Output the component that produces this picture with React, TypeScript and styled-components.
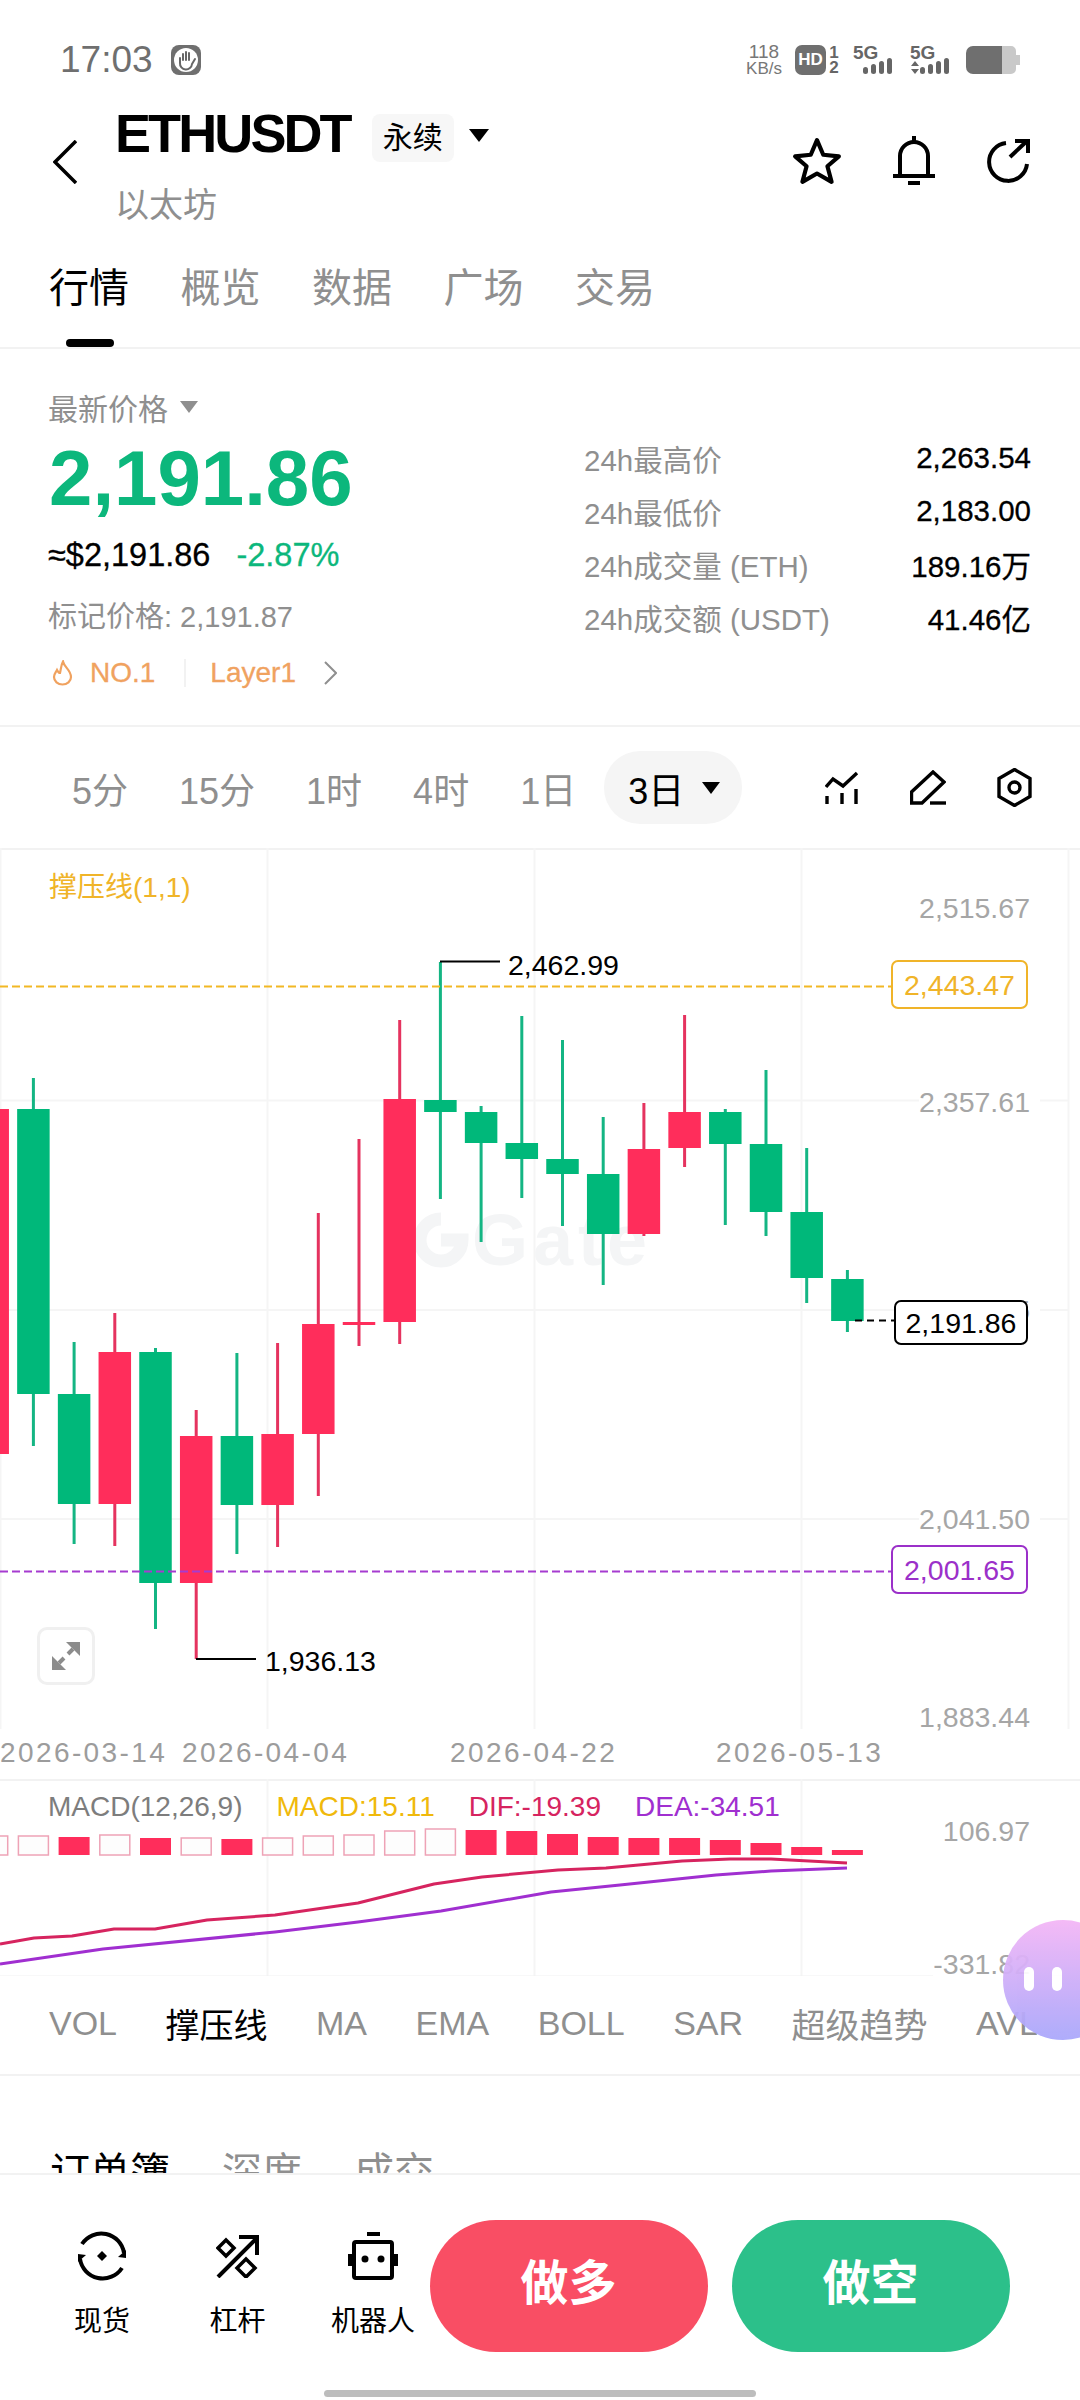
import React from 'react';
import styled, { createGlobalStyle } from 'styled-components';

const FONT = '"Liberation Sans", "Noto Sans CJK SC", sans-serif';

const GlobalStyle = createGlobalStyle`
  html, body {
    margin: 0;
    padding: 0;
    background: #fff;
  }
  * {
    box-sizing: border-box;
  }
`;

const Root = styled.div`
  position: relative;
  width: 1080px;
  height: 2400px;
  overflow: hidden;
  display: flex;
  flex-direction: column;
  background: #fff;
  color: #000;
  font-family: ${FONT};
`;

/* status bar */
const StatusBar = styled.div`
  height: 100px;
  padding: 40px 60px 20px 60px;
  display: flex;
  align-items: center;
  color: #6f6f6f;
`;

const Clock = styled.span`
  font-size: 37px;
  line-height: 40px;
  margin-right: 18px;
`;

const StatusRight = styled.div`
  margin-left: auto;
  display: flex;
  align-items: center;
  height: 40px;
`;

const NetSpeed = styled.div`
  width: 38px;
  margin-left: -9px;
  display: flex;
  flex-direction: column;
  align-items: center;
  font-size: 19px;
  line-height: 17px;
  color: #777;
  & > small {
    font-size: 17px;
    white-space: nowrap;
  }
`;

const HdBadge = styled.div`
  width: 31px;
  height: 30px;
  margin-left: 12px;
  border-radius: 7px;
  background: #6f6f6f;
  color: #fff;
  font-size: 17px;
  font-weight: 700;
  line-height: 30px;
  text-align: center;
`;

const SimSlots = styled.div`
  width: 14px;
  margin-left: 1px;
  display: flex;
  flex-direction: column;
  align-items: center;
  font-size: 17px;
  font-weight: 700;
  line-height: 15px;
  color: #666;
`;

/* header */
const Header = styled.div`
  height: 130px;
  padding: 14px 50px 0 53px;
  display: flex;
  align-items: flex-start;
`;

const BackButton = styled.svg`
  margin-top: 26px;
  margin-right: 38px;
  flex: none;
`;

const TitleBlock = styled.div`
  display: flex;
  flex-direction: column;
`;

const TitleLine = styled.div`
  display: flex;
  align-items: center;
  height: 48px;
`;

const Symbol = styled.span`
  font-size: 54px;
  font-weight: 700;
  letter-spacing: -2.9px;
  line-height: 48px;
  margin-top: -10px;
  margin-right: 22px;
`;

const Tag = styled.span`
  width: 82px;
  height: 48px;
  border-radius: 8px;
  background: #f7f7f7;
  font-size: 30px;
  line-height: 48px;
  text-align: center;
`;

const Caret = styled.span<{ $size: number; $color: string }>`
  display: inline-block;
  flex: none;
  width: 0;
  height: 0;
  border-left: ${(p) => p.$size}px solid transparent;
  border-right: ${(p) => p.$size}px solid transparent;
  border-top: ${(p) => Math.round(p.$size * 1.3)}px solid ${(p) => p.$color};
`;

const TagCaret = styled(Caret)`
  margin-left: 15px;
  margin-top: -6px;
`;

const SubName = styled.div`
  margin-top: 23px;
  font-size: 34px;
  line-height: 40px;
  color: #8f8f8f;
`;

const HeaderActions = styled.div`
  margin-left: auto;
  display: flex;
  align-items: center;
  height: 50px;
  margin-top: 22px;
  gap: 51px;
`;

/* main tabs */
const MainTabs = styled.div`
  height: 119px;
  padding: 38px 0 0 49px;
  display: flex;
  gap: 51.5px;
  border-bottom: 2px solid #f2f2f2;
`;

const MainTab = styled.span<{ $active?: boolean }>`
  position: relative;
  height: 40px;
  font-size: 40px;
  line-height: 40px;
  color: ${(p) => (p.$active ? '#000' : '#8f8f8f')};
  &::after {
    content: '';
    display: ${(p) => (p.$active ? 'block' : 'none')};
    position: absolute;
    left: 17px;
    top: 71px;
    width: 48px;
    height: 8px;
    border-radius: 4px;
    background: #000;
  }
`;

/* price info */
const InfoSection = styled.div`
  height: 378px;
  padding: 38px 49px 0 48px;
  display: flex;
  justify-content: space-between;
  border-bottom: 2px solid #f2f2f2;
`;

const InfoLeft = styled.div`
  display: flex;
  flex-direction: column;
`;

const PriceLabel = styled.div`
  display: flex;
  align-items: center;
  gap: 12px;
  height: 40px;
  font-size: 30px;
  color: #8f8f8f;
`;

const BigPrice = styled.div`
  margin-top: 11px;
  font-size: 78px;
  font-weight: 700;
  line-height: 80px;
  color: #0cb77c;
  margin-left: 1px;
`;

const FiatLine = styled.div`
  margin-top: 17px;
  display: flex;
  gap: 26px;
  font-size: 32.5px;
  line-height: 40px;
  -webkit-text-stroke: 0.3px currentColor;
`;

const Change = styled.span`
  color: #0cb77c;
`;

const MarkPrice = styled.div`
  margin-top: 22px;
  font-size: 29px;
  line-height: 40px;
  color: #8f8f8f;
`;

const TagRow = styled.div`
  margin-top: 16px;
  padding-left: 4px;
  display: flex;
  align-items: center;
  height: 40px;
  font-size: 28px;
  color: #f0a25f;
  -webkit-text-stroke: 0.3px currentColor;
`;

const TagDivider = styled.span`
  width: 2px;
  height: 28px;
  margin: 0 24px 0 29px;
  background: #f2f2f2;
`;

const InfoRight = styled.div`
  width: 447px;
  padding-top: 44px;
  display: flex;
  flex-direction: column;
`;

const StatRow = styled.div`
  height: 53px;
  display: flex;
  align-items: center;
  justify-content: space-between;
  font-size: 29.5px;
`;

const StatLabel = styled.span`
  color: #8f8f8f;
`;

const StatValue = styled.span`
  -webkit-text-stroke: 0.3px currentColor;
`;

/* timeframe row */
const TimeRow = styled.div`
  height: 121px;
  padding: 0 48px 0 72px;
  display: flex;
  align-items: center;
  gap: 51px;
  font-size: 36px;
  color: #8f8f8f;
`;

const TimePill = styled.div`
  margin-left: -23px;
  width: 138px;
  height: 73px;
  padding-left: 24px;
  display: flex;
  align-items: center;
  gap: 18px;
  border-radius: 36px;
  background: #f5f5f5;
  color: #000;
`;

const ToolIcons = styled.div`
  margin-left: auto;
  display: flex;
  align-items: center;
  gap: 51px;
`;

/* chart */
const ChartPanel = styled.div`
  position: relative;
  height: 881px;
  border-top: 2px solid #f2f2f2;
  flex: none;
`;

const ChartSvg = styled.svg`
  display: block;
  position: absolute;
  left: 0;
  top: -2px;
`;

const IndicatorName = styled.div`
  position: absolute;
  left: 49px;
  top: 21px;
  font-size: 28px;
  line-height: 34px;
  color: #f0b429;
`;

const AxisLabel = styled.span<{ $y: number }>`
  position: absolute;
  right: 50px;
  top: ${(p) => p.$y}px;
  transform: translateY(-50%);
  padding: 0 10px 0 0;
  margin-right: -10px;
  font-size: 28.5px;
  line-height: 32px;
  color: #a6a6a6;
  background: #fff;
`;

const PriceTag = styled.span<{ $y: number; $color: string; $width: number }>`
  position: absolute;
  right: 52px;
  top: ${(p) => p.$y}px;
  width: ${(p) => p.$width}px;
  height: ${(p) => (p.$color === '#000' ? 45 : 49)}px;
  border: 2px solid ${(p) => p.$color};
  border-radius: 7px;
  background: #fff;
  font-size: 28.5px;
  line-height: ${(p) => (p.$color === '#000' ? 42 : 46)}px;
  text-align: center;
  color: ${(p) => p.$color};
`;

const PriceNote = styled.span<{ $x: number; $y: number }>`
  position: absolute;
  left: ${(p) => p.$x}px;
  top: ${(p) => p.$y}px;
  transform: translateY(-50%);
  font-size: 28.5px;
  line-height: 32px;
`;

const ExpandButton = styled.div`
  position: absolute;
  left: 37px;
  top: 777px;
  width: 58px;
  height: 58px;
  display: flex;
  align-items: center;
  justify-content: center;
  border: 3px solid #f0f0f0;
  border-radius: 10px;
  background: #fff;
`;

const DateAxis = styled.div`
  height: 52px;
  display: grid;
  grid-template-columns: 182px 268px 266px 1fr;
  align-items: center;
  padding-bottom: 2px;
  font-size: 28px;
  letter-spacing: 2.4px;
  color: #9c9c9c;
  border-bottom: 2px solid #f2f2f2;
`;

/* macd */
const MacdPanel = styled.div`
  position: relative;
  height: 197px;
  flex: none;
`;

const MacdLegend = styled.div`
  position: absolute;
  left: 48px;
  top: 9px;
  display: flex;
  gap: 34px;
  font-size: 28px;
  line-height: 34px;
`;

const LegendItem = styled.span<{ $color: string }>`
  color: ${(p) => p.$color};
`;

/* indicator tabs */
const IndicatorTabs = styled.div`
  height: 98px;
  padding: 0 0 6px 49px;
  display: flex;
  align-items: center;
  gap: 48.5px;
  font-size: 34px;
  white-space: nowrap;
  color: #8f8f8f;
  border-bottom: 2px solid #f2f2f2;
  flex: none;
`;

const IndicatorTab = styled.span<{ $active?: boolean }>`
  color: ${(p) => (p.$active ? '#000' : '#8f8f8f')};
`;

/* order book tabs, cut by the bottom bar */
const BookTabs = styled.div`
  flex: 1;
  min-height: 0;
  overflow: hidden;
  padding: 74px 0 0 50px;
  display: flex;
  gap: 52px;
`;

const BookTab = styled.span<{ $active?: boolean }>`
  height: 40px;
  font-size: 40px;
  line-height: 44px;
  color: ${(p) => (p.$active ? '#000' : '#8f8f8f')};
`;

/* bottom bar */
const BottomBar = styled.div`
  height: 227px;
  flex: none;
  display: flex;
  flex-direction: column;
  align-items: center;
  border-top: 2px solid #f2f2f2;
  background: #fff;
`;

const BottomRow = styled.div`
  width: 100%;
  height: 132px;
  margin-top: 45px;
  padding: 0 48px 0 52px;
  display: flex;
`;

const ShortCut = styled.div`
  width: 100px;
  margin-right: 35.5px;
  padding-top: 11px;
  display: flex;
  flex-direction: column;
  align-items: center;
  height: 132px;
  font-size: 28px;
  line-height: 34px;
`;

const ShortCutIcon = styled.div`
  height: 50px;
  margin-bottom: 24px;
  display: flex;
  align-items: center;
`;

const TradeButton = styled.div<{ $color: string }>`
  width: 278px;
  height: 132px;
  margin-left: ${(p) => (p.$color === '#2cc08a' ? 24 : -29)}px;
  border-radius: 66px;
  background: ${(p) => p.$color};
  color: #fff;
  font-size: 48px;
  font-weight: 700;
  line-height: 128px;
  text-align: center;
`;

const HomeBar = styled.div`
  width: 432px;
  height: 7px;
  margin-top: 38px;
  border-radius: 4px;
  background: #bdbdbd;
`;

const FloatingBall = styled.div`
  position: absolute;
  left: 1003px;
  top: 1920px;
  width: 120px;
  height: 120px;
  padding: 47px 0 0 21px;
  display: flex;
  gap: 18px;
  border-radius: 50%;
  background: linear-gradient(180deg, #f4b6f6 0%, #a9a7fb 100%);
  opacity: 0.94;
`;

const BallEye = styled.span`
  width: 10px;
  height: 24px;
  border-radius: 5px;
  background: #fff;
`;

const RED = '#ff2d5b';
const RED_WICK = '#e5335f';
const GREEN = '#00b87a';
const GREEN_WICK = '#14b583';

// [rising, wick top, body top, body bottom, wick bottom], page y pixels
const CANDLES: [boolean, number, number, number, number][] = [
  [true, 1109, 1109, 1454, 1454],
  [false, 1078, 1109, 1394, 1446],
  [false, 1342, 1394, 1504, 1544],
  [true, 1313, 1352, 1504, 1546],
  [false, 1348, 1352, 1583, 1629],
  [true, 1410, 1436, 1583, 1659],
  [false, 1353, 1436, 1505, 1554],
  [true, 1343, 1434, 1505, 1547],
  [true, 1213, 1324, 1434, 1496],
  [true, 1139, 1322, 1325, 1346],
  [true, 1020, 1099, 1322, 1344],
  [false, 962, 1100, 1112, 1199],
  [false, 1106, 1112, 1143, 1242],
  [false, 1016, 1143, 1159, 1198],
  [false, 1040, 1159, 1174, 1226],
  [false, 1117, 1174, 1234, 1285],
  [true, 1103, 1149, 1234, 1236],
  [true, 1015, 1112, 1148, 1167],
  [false, 1109, 1112, 1144, 1225],
  [false, 1070, 1144, 1212, 1236],
  [false, 1148, 1212, 1278, 1303],
  [false, 1270, 1279, 1321, 1332],
];

// [filled, top y]
const MACD_BARS: [boolean, number][] = [
  [false, 1836],
  [false, 1836],
  [true, 1837],
  [false, 1835],
  [true, 1838],
  [false, 1838],
  [true, 1839],
  [false, 1838],
  [false, 1836],
  [false, 1835],
  [false, 1831],
  [false, 1829],
  [true, 1830],
  [true, 1831],
  [true, 1834],
  [true, 1837],
  [true, 1838],
  [true, 1838],
  [true, 1840],
  [true, 1843],
  [true, 1847],
  [true, 1850],
];

const candleX = (i: number) => -7.3 + 40.7 * i;

const StarIcon = () => (
  <svg width="50" height="48" viewBox="0 0 48 46" fill="none" stroke="#000" strokeWidth="4" strokeLinejoin="round">
    <polygon points="24,3 30,17 45,18.5 34,28 38,43 24,35 10,43 14,28 3,18.5 18,17" />
  </svg>
);

const BellIcon = () => (
  <svg width="42" height="50" viewBox="0 0 42 50" fill="none" stroke="#000" strokeWidth="4">
    <path d="M21 0V6" />
    <path d="M7 40V20a14 14 0 0 1 28 0V40" />
    <path d="M0 40H42" />
    <path d="M15 47H27" />
  </svg>
);

const ShareIcon = () => (
  <svg width="44" height="44" viewBox="0 0 44 44" fill="none" stroke="#000" strokeWidth="4">
    <path d="M20 4A19 19 0 1 0 41 25" />
    <path d="M24 18L41 2" />
    <path d="M29 2H42V14" />
  </svg>
);

const ChartIcon = () => (
  <svg width="34" height="34" viewBox="0 0 34 34" fill="none" stroke="#000" strokeWidth="3.4">
    <path d="M1 16L8 8L18 15L32 2" />
    <path d="M2 25V33M17 22V33M31 18V33" />
  </svg>
);

const PencilIcon = () => (
  <svg width="36" height="35" viewBox="0 0 36 35" fill="none" stroke="#000" strokeWidth="3.4">
    <path d="M1.5 33V22L23 2L34 12L12 33Z" />
    <path d="M20 33H36" />
  </svg>
);

const HexIcon = () => (
  <svg width="35" height="39" viewBox="0 0 35 39" fill="none" stroke="#000" strokeWidth="3.4">
    <polygon points="17.5,1.5 33,10.5 33,28.5 17.5,37.5 2,28.5 2,10.5" />
    <circle cx="17.5" cy="19.5" r="5.5" />
  </svg>
);

const SyncIcon = () => (
  <svg width="50" height="50" viewBox="0 0 50 50" fill="none" stroke="#000" strokeWidth="4">
    <path d="M5 13A23 23 0 0 1 47 22" />
    <path d="M45 37A23 23 0 0 1 3 28" />
    <polygon points="49,19 49,27 41,26" fill="#000" stroke="none" />
    <polygon points="1,23 9,24 1,31" fill="#000" stroke="none" />
    <polygon points="25,20 30,25 25,30 20,25" fill="#000" stroke="none" />
  </svg>
);

const LeverIcon = () => (
  <svg width="43" height="43" viewBox="0 0 43 43" fill="none" stroke="#000" strokeWidth="4">
    <path d="M2 42L41 3" />
    <path d="M23 2H41V20" />
    <polygon points="10,5 18,13 10,21 2,13" strokeWidth="3.5" />
    <polygon points="30,24 39,33 30,42 21,33" strokeWidth="3.5" />
  </svg>
);

const RobotIcon = () => (
  <svg width="50" height="48" viewBox="0 0 50 48" fill="none" stroke="#000" strokeWidth="4">
    <path d="M19 2H32" />
    <rect x="6" y="10" width="38" height="36" rx="2" />
    <path d="M2 22V34M48 22V34" />
    <circle cx="17" cy="27" r="3.5" fill="#000" stroke="none" />
    <circle cx="33" cy="27" r="3.5" fill="#000" stroke="none" />
  </svg>
);

const CHART_WIDTH = 1080;

const CandleChart = () => (
  <ChartSvg width={CHART_WIDTH} height="881" viewBox="0 848 1080 881">
    {[0, 267, 534, 801, 1068].map((x) => (
      <line key={x} x1={x + 0.5} x2={x + 0.5} y1="848" y2="1729" stroke="#f5f5f5" strokeWidth="2" />
    ))}
    {[1100.5, 1310, 1519].map((y) => (
      <line key={y} x1="0" x2="1068" y1={y} y2={y} stroke="#f5f5f5" strokeWidth="2" />
    ))}

    <g fill="none" stroke="#f4f5f6" strokeWidth="13">
      <path d="M441 1219A21 21 0 1 0 462 1240H441" />
    </g>
    <text x="472" y="1265" fontFamily={FONT} fontWeight="700" fontSize="72" letterSpacing="5" fill="#f4f5f6">
      Gate
    </text>

    {CANDLES.map(([up, wickTop, top, bottom, wickBottom], i) => {
      const x = candleX(i);
      return (
        <g key={i}>
          <rect x={x - 1.5} y={wickTop} width="3" height={wickBottom - wickTop} fill={up ? RED_WICK : GREEN_WICK} />
          <rect x={x - 16.25} y={top} width="32.5" height={bottom - top} fill={up ? RED : GREEN} />
        </g>
      );
    })}

    <line x1="440" x2="500" y1="961.5" y2="961.5" stroke="#000" strokeWidth="2" />
    <line x1="196" x2="256" y1="1659" y2="1659" stroke="#000" strokeWidth="2" />
    <line x1="0" x2="891" y1="986.5" y2="986.5" stroke="#f2b824" strokeWidth="2" strokeDasharray="8 4" />
    <line x1="0" x2="891" y1="1571.5" y2="1571.5" stroke="#a63bd0" strokeWidth="2" strokeDasharray="8 4" />
    <line x1="855" x2="895" y1="1320.5" y2="1320.5" stroke="#000" strokeWidth="2" strokeDasharray="7 5" />
  </ChartSvg>
);

const MacdChart = () => (
  <ChartSvg width={CHART_WIDTH} height="197" viewBox="0 1779 1080 197">
    {[267, 534, 801].map((x) => (
      <line key={x} x1={x + 0.5} x2={x + 0.5} y1="1779" y2="1976" stroke="#f5f5f5" strokeWidth="2" />
    ))}
    <line x1="0" x2="1068" y1="1976.5" y2="1976.5" stroke="#f2f2f2" strokeWidth="2" />
    {MACD_BARS.map(([filled, top], i) => {
      const x = candleX(i);
      return filled ? (
        <rect key={i} x={x - 15.5} y={top} width="31" height={1855 - top} fill={RED} />
      ) : (
        <rect key={i} x={x - 15} y={top} width="30" height={1855 - top} fill="#fdfdfd" stroke="#eea3b6" strokeWidth="1.5" />
      );
    })}
    <polyline
      fill="none"
      stroke="#d6245f"
      strokeWidth="3"
      strokeLinejoin="round"
      points="0,1944 34,1938 72,1936 114,1929 155,1929 207,1920 275,1915 358,1903 434,1884 482,1877 558,1870 606,1868 682,1861 730,1859 771,1859 847,1863"
    />
    <polyline
      fill="none"
      stroke="#a02fd0"
      strokeWidth="3"
      strokeLinejoin="round"
      points="0,1964 103,1949 275,1932 358,1922 441,1911 551,1892 620,1885 716,1875 771,1871 847,1868"
    />
  </ChartSvg>
);

const HandBadge = () => (
  <svg width="30" height="30" viewBox="0 0 30 30">
    <rect width="30" height="30" rx="8" fill="#6f6f6f" />
    <circle cx="15" cy="15" r="12" fill="#fff" />
    <path d="M9 13V18a6 6 0 0 0 12 1l3-5M12 9V15M15 7V15M18 8V15" fill="none" stroke="#666" strokeWidth="2" strokeLinecap="round" />
  </svg>
);

const SignalIcon = ({ arrows }: { arrows?: boolean }) => (
  <svg width="44" height="30" viewBox="0 0 44 30">
    <text x="0" y="14" fontFamily={FONT} fontSize="19" fontWeight="700" fill="#666">
      5G
    </text>
    {arrows && <path d="M1 21L5 16L9 21ZM1 24H9L5 29Z" fill="#666" />}
    <rect x="10" y="22" width="5" height="7" rx="2.5" fill="#666" />
    <rect x="18" y="19" width="5" height="10" rx="2.5" fill="#666" />
    <rect x="26" y="16" width="5" height="13" rx="2.5" fill="#666" />
    <rect x="34" y="13" width="5" height="16" rx="2.5" fill="#666" />
  </svg>
);

const BatteryIcon = () => (
  <svg width="54" height="28" viewBox="0 0 54 28">
    <path d="M36 0H45a5 5 0 0 1 5 5V9h4V19h-4v4a5 5 0 0 1 -5 5H36Z" fill="#c9c9c9" />
    <path d="M7 0H36V28H7a7 7 0 0 1 -7 -7V7a7 7 0 0 1 7 -7Z" fill="#6f6f6f" />
  </svg>
);

const StatRows = [
  ['24h最高价', '2,263.54'],
  ['24h最低价', '2,183.00'],
  ['24h成交量 (ETH)', '189.16万'],
  ['24h成交额 (USDT)', '41.46亿'],
];

const App: React.FC = () => (
  <Root>
    <GlobalStyle />
    <StatusBar>
      <Clock>17:03</Clock>
      <HandBadge />
      <StatusRight>
        <NetSpeed>
          118
          <small>KB/s</small>
        </NetSpeed>
        <HdBadge>HD</HdBadge>
        <SimSlots>
          <span>1</span>
          <span>2</span>
        </SimSlots>
        <span style={{ width: 12 }} />
        <SignalIcon />
        <span style={{ width: 13 }} />
        <SignalIcon arrows />
        <span style={{ width: 12 }} />
        <BatteryIcon />
      </StatusRight>
    </StatusBar>

    <Header>
      <BackButton width="24" height="44" viewBox="0 0 24 44" fill="none" stroke="#000" strokeWidth="3.5">
        <path d="M23 1L2 22L23 43" />
      </BackButton>
      <TitleBlock>
        <TitleLine>
          <Symbol>ETHUSDT</Symbol>
          <Tag>永续</Tag>
          <TagCaret $size={10} $color="#000" />
        </TitleLine>
        <SubName>以太坊</SubName>
      </TitleBlock>
      <HeaderActions>
        <StarIcon />
        <BellIcon />
        <ShareIcon />
      </HeaderActions>
    </Header>

    <MainTabs>
      <MainTab $active>行情</MainTab>
      <MainTab>概览</MainTab>
      <MainTab>数据</MainTab>
      <MainTab>广场</MainTab>
      <MainTab>交易</MainTab>
    </MainTabs>

    <InfoSection>
      <InfoLeft>
        <PriceLabel>
          最新价格
          <Caret $size={9} $color="#8f8f8f" />
        </PriceLabel>
        <BigPrice>2,191.86</BigPrice>
        <FiatLine>
          <span>≈$2,191.86</span>
          <Change>-2.87%</Change>
        </FiatLine>
        <MarkPrice>标记价格: 2,191.87</MarkPrice>
        <TagRow>
          <svg width="21" height="26" viewBox="0 0 21 26" fill="none" stroke="#f0a25f" strokeWidth="2.2" style={{ marginRight: 17 }}>
            <path d="M11 1.5C12 7 19 10 19 17a8.5 7.5 0 0 1 -17 0C2 14 4 12 5 10C6 12 7 13 8 13C9 9 9 5 11 1.5Z" />
          </svg>
          NO.1
          <TagDivider />
          Layer1
          <svg width="13" height="24" viewBox="0 0 13 24" fill="none" stroke="#8f8f8f" strokeWidth="2" style={{ marginLeft: 28 }}>
            <path d="M1 1L12 12L1 23" />
          </svg>
        </TagRow>
      </InfoLeft>
      <InfoRight>
        {StatRows.map(([label, value]) => (
          <StatRow key={label}>
            <StatLabel>{label}</StatLabel>
            <StatValue>{value}</StatValue>
          </StatRow>
        ))}
      </InfoRight>
    </InfoSection>

    <TimeRow>
      <span>5分</span>
      <span>15分</span>
      <span>1时</span>
      <span>4时</span>
      <span>1日</span>
      <TimePill>
        3日
        <Caret $size={9} $color="#000" />
      </TimePill>
      <ToolIcons>
        <ChartIcon />
        <PencilIcon />
        <HexIcon />
      </ToolIcons>
    </TimeRow>

    <ChartPanel>
      <CandleChart />
      <IndicatorName>撑压线(1,1)</IndicatorName>
      <AxisLabel $y={58}>2,515.67</AxisLabel>
      <AxisLabel $y={252}>2,357.61</AxisLabel>
      <AxisLabel $y={460}>2,199.55</AxisLabel>
      <AxisLabel $y={669}>2,041.50</AxisLabel>
      <AxisLabel $y={867}>1,883.44</AxisLabel>
      <PriceTag $y={110} $color="#f0b429" $width={137}>2,443.47</PriceTag>
      <PriceTag $y={450} $color="#000" $width={134}>2,191.86</PriceTag>
      <PriceTag $y={695} $color="#9b30c9" $width={137}>2,001.65</PriceTag>
      <PriceNote $x={508} $y={115}>2,462.99</PriceNote>
      <PriceNote $x={265} $y={811}>1,936.13</PriceNote>
      <ExpandButton>
        <svg width="28" height="28" viewBox="0 0 28 28" fill="#8c8c8c" stroke="none">
          <polygon points="14,0 28,0 28,14" />
          <polygon points="0,14 0,28 14,28" />
          <path d="M21 7L16 12M7 21L12 16" stroke="#8c8c8c" strokeWidth="4" />
        </svg>
      </ExpandButton>
    </ChartPanel>

    <DateAxis>
      <span>2026-03-14</span>
      <span>2026-04-04</span>
      <span>2026-04-22</span>
      <span>2026-05-13</span>
    </DateAxis>

    <MacdPanel>
      <MacdChart />
      <MacdLegend>
        <LegendItem $color="#7d7d7d">MACD(12,26,9)</LegendItem>
        <LegendItem $color="#f0b90b">MACD:15.11</LegendItem>
        <LegendItem $color="#d6245f">DIF:-19.39</LegendItem>
        <LegendItem $color="#a02fd0">DEA:-34.51</LegendItem>
      </MacdLegend>
      <AxisLabel $y={50}>106.97</AxisLabel>
      <AxisLabel $y={183}>-331.82</AxisLabel>
    </MacdPanel>

    <IndicatorTabs>
      <IndicatorTab>VOL</IndicatorTab>
      <IndicatorTab $active>撑压线</IndicatorTab>
      <IndicatorTab>MA</IndicatorTab>
      <IndicatorTab>EMA</IndicatorTab>
      <IndicatorTab>BOLL</IndicatorTab>
      <IndicatorTab>SAR</IndicatorTab>
      <IndicatorTab>超级趋势</IndicatorTab>
      <IndicatorTab>AVL</IndicatorTab>
    </IndicatorTabs>

    <BookTabs>
      <BookTab $active>订单簿</BookTab>
      <BookTab>深度</BookTab>
      <BookTab>成交</BookTab>
    </BookTabs>

    <BottomBar>
      <BottomRow>
        <ShortCut>
          <ShortCutIcon>
            <SyncIcon />
          </ShortCutIcon>
          现货
        </ShortCut>
        <ShortCut>
          <ShortCutIcon>
            <LeverIcon />
          </ShortCutIcon>
          杠杆
        </ShortCut>
        <ShortCut>
          <ShortCutIcon>
            <RobotIcon />
          </ShortCutIcon>
          机器人
        </ShortCut>
        <TradeButton $color="#f94e64">做多</TradeButton>
        <TradeButton $color="#2cc08a">做空</TradeButton>
      </BottomRow>
      <HomeBar />
    </BottomBar>

    <FloatingBall>
      <BallEye />
      <BallEye />
    </FloatingBall>
  </Root>
);

export default App;
